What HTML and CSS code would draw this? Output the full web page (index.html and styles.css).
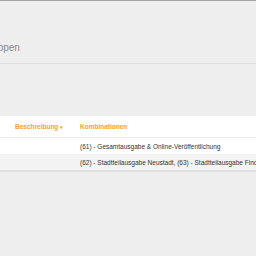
FILE: index.html
```html
<!DOCTYPE html>
<html lang="de">
<head>
    <meta charset="UTF-8">
    <meta name="viewport" content="width=device-width, initial-scale=1.0">
    <title>Gruppen</title>
    <link rel="stylesheet" href="styles.css">
</head>
<body>
  <div class="topbar"></div>
  <div class="page-header">
    <h1 class="page-title">Gruppen</h1>
  </div>

  <div class="card">
    <table class="list">
      <colgroup>
        <col class="col-desc">
        <col>
      </colgroup>
      <thead>
        <tr>
          <th class="first">Beschreibung <span class="caret">&#9662;</span></th>
          <th>Kombinationen</th>
        </tr>
      </thead>
      <tbody>
        <tr>
          <td></td>
          <td>(61) - Gesamtausgabe &amp; Online-Veröffentlichung</td>
        </tr>
        <tr class="alt">
          <td></td>
          <td>(62) - Stadtteilausgabe Neustadt, (63) - Stadtteilausgabe Findorff</td>
        </tr>
      </tbody>
    </table>
  </div>
</body>
</html>
```

FILE: styles.css
```css
body {
    margin: 0;
    background: #eeeeee;
    font-family: "Liberation Sans", Arial, sans-serif;
    overflow: hidden;
}

.topbar {
    height: 1px;
    background: #a3a3a3;
}

.page-header {
    height: 62px;
    border-bottom: 1px solid #dedede;
    display: flex;
    align-items: flex-end;
    overflow: hidden;
}

.page-title {
    margin: 0 0 10px -19px;
    font-size: 10px;
    font-weight: normal;
    color: #8a8a8a;
    white-space: nowrap;
}

.card {
    margin-top: 52px;
    background: #ffffff;
    border-bottom: 2px solid #e2e2e2;
}

.list {
    border-collapse: collapse;
    table-layout: fixed;
    width: 100%;
    font-size: 6.5px;
    white-space: nowrap;
}

.list col.col-desc {
    width: 80px;
}

.list th {
    text-align: left;
    color: #f7a21e;
    font-weight: bold;
    height: 21px;
    padding: 0;
    border-bottom: 1px solid #ececec;
    overflow: hidden;
}

.list th.first {
    padding-left: 15px;
}

.caret {
    font-size: 5px;
}

.list td {
    height: 16px;
    padding: 0;
    color: #333333;
    overflow: hidden;
}

.list tr.alt td {
    background: #f3f3f3;
}
```
